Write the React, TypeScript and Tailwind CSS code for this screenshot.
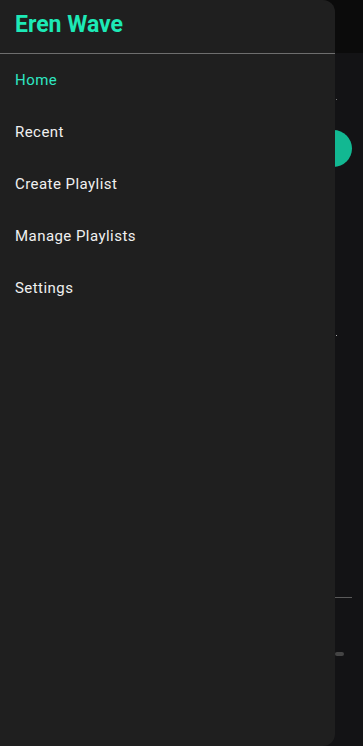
import React from 'react';

const menuItems = [
  { label: 'Home', active: true },
  { label: 'Recent', active: false },
  { label: 'Create Playlist', active: false },
  { label: 'Manage Playlists', active: false },
  { label: 'Settings', active: false },
];

function Backdrop() {
  // the screen that sits behind the open drawer
  return (
    <div className="absolute inset-0 flex flex-col">
      <div className="h-[53px] bg-[#0b0b0b]" />
      <div className="relative flex-1 bg-[#131315]">
        <div className="absolute left-[336px] top-[46px] h-[1px] w-[1px] bg-[#777]" />
        <div className="absolute left-[315px] top-[77px] h-[37px] w-[37px] rounded-full bg-[#12b892]" />
        <div className="absolute left-[336px] top-[282px] h-[1px] w-[1px] bg-[#aaa]" />
        <div className="absolute left-[335px] top-[544px] h-[1px] w-[17px] bg-[#5a5a5a]" />
        <div className="absolute left-[335px] top-[599px] h-[4px] w-[9px] rounded-full bg-[#444]" />
      </div>
    </div>
  );
}

export default function App() {
  return (
    <div
      className="relative h-[746px] w-[363px] overflow-hidden bg-[#131315]"
      style={{ fontFamily: 'Roboto, "Noto Sans", sans-serif' }}
    >
      <Backdrop />
      <nav className="absolute left-0 top-0 flex h-full w-[335px] flex-col rounded-r-[12px] bg-[#1f1f1f]">
        <div className="flex h-[54px] items-center border-b-[1.5px] border-[#6e6e6e] px-[15px] pb-[5px]">
          <h1 className="text-[23px] font-bold leading-none text-[#1de9b6]">Eren Wave</h1>
        </div>
        <ul className="flex flex-col">
          {menuItems.map(item => (
            <li
              key={item.label}
              className={
                item.active
                  ? 'flex h-[52px] items-center px-[15px] text-[15px] tracking-[0.45px] text-[#2ee6c2]'
                  : 'flex h-[52px] items-center px-[15px] text-[15px] tracking-[0.45px] text-[#f0f0f0]'
              }
            >
              {item.label}
            </li>
          ))}
        </ul>
      </nav>
    </div>
  );
}
